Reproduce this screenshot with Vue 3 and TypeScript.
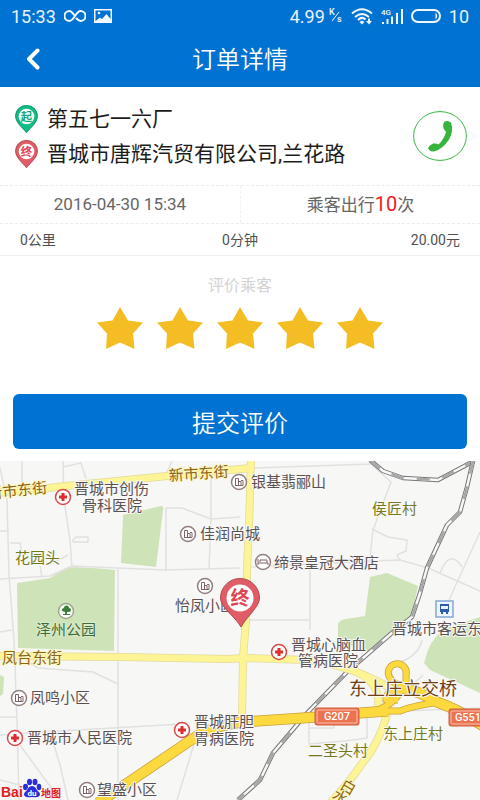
<script setup lang="ts">
import { ref } from 'vue'

interface MapLabel {
  text: string
  x: number
  y: number
  kind: 'poi' | 'village' | 'street' | 'park' | 'bridge'
  turn?: number
}

const rating = ref(5)

const labels: MapLabel[] = [
  { text: '新市东街', x: -12, y: 499, kind: 'street', turn: -6 },
  { text: '新市东街', x: 169, y: 481, kind: 'street', turn: -4 },
  { text: '凤台东街', x: 2, y: 663, kind: 'street' },
  { text: '白', x: 339, y: 788, kind: 'street', turn: 30 },
  { text: '水', x: 331, y: 798, kind: 'street', turn: 30 },
  { text: '晋城市创伤', x: 74, y: 494, kind: 'poi' },
  { text: '骨科医院', x: 82, y: 511, kind: 'poi' },
  { text: '银基翡郦山', x: 251, y: 487, kind: 'poi' },
  { text: '佳润尚城', x: 200, y: 539, kind: 'poi' },
  { text: '缔景皇冠大酒店', x: 274, y: 568, kind: 'poi' },
  { text: '怡凤小区', x: 175, y: 611, kind: 'poi' },
  { text: '晋城市客运东', x: 392, y: 634, kind: 'poi' },
  { text: '晋城心脑血', x: 291, y: 650, kind: 'poi' },
  { text: '管病医院', x: 298, y: 666, kind: 'poi' },
  { text: '凤鸣小区', x: 30, y: 703, kind: 'poi' },
  { text: '晋城市人民医院', x: 27, y: 743, kind: 'poi' },
  { text: '晋城肝胆', x: 194, y: 727, kind: 'poi' },
  { text: '胃病医院', x: 194, y: 744, kind: 'poi' },
  { text: '望盛小区', x: 97, y: 795, kind: 'poi' },
  { text: '侯匠村', x: 372, y: 514, kind: 'village' },
  { text: '花园头', x: 15, y: 563, kind: 'village' },
  { text: '东上庄村', x: 383, y: 739, kind: 'village' },
  { text: '二圣头村', x: 308, y: 756, kind: 'village' },
  { text: '泽州公园', x: 36, y: 635, kind: 'park' },
  { text: '东上庄立交桥', x: 349, y: 695, kind: 'bridge' },
]

const hospitals = [[63, 497], [279, 652], [182, 730], [15, 738]]
const estates = [[239, 482], [188, 534], [205, 586], [19, 698], [87, 790]]

const lanes = [
  'M0 468 L7 500 L9 575 L14 640 L17 720 L19 800',
  'M22 461 V482 M63 461 L64 500 L70 540 L72 568',
  'M63 467 L81 463 L86 479',
  'M166 474 L172 461',
  'M0 531 H9 M10 543 H20 L23 558',
  'M73 540 L76 537 H88 V542 H73 Z',
  'M0 579 L50 576 L72 566 L118 568 L166 570 L240 568',
  'M118 568 V800',
  'M166 571 V508 H182 L211 519 L240 517 M211 470 V518 L209 568',
  'M53 563 L68 555 M40 566 L42 577',
  'M251 468 L372 464 M372 465 L391 482 L373 530 L369 566',
  'M372 529 L388 537 L407 540 L406 551 L397 555 L400 561',
  'M250 567 L372 561 L400 560 L428 568 L480 591',
  'M310 568 V630 M247 620 H310',
  'M480 532 L449 600 M440 573 Q450 548 462 567',
  'M27 661 L38 668 L93 672 L118 684',
  'M0 717 H16 M0 735 L60 731 L182 724',
  'M20 745 L60 800 M54 745 L60 765 L68 800 M0 780 L20 785',
  'M195 741 L180 790 L177 800 M12 630 L0 632',
  'M309 713 V744 L345 741 L367 738 V716 M309 728 H334 V716',
  'M402 711 L480 708 M407 690 L423 675 M388 665 Q418 660 422 640',
]

const minorRoads = [
  'M-4 493 L48 488 L66 486 L167 476 L251 468',
  'M251 458 L249 527 L247 570 L246 620 L243 658 L242 716',
  'M-4 656 L120 657 L227 659 L247 658 L307 660 Q350 665 390 688',
  'M355 671 Q382 684 378 708',
  'M387 714 Q382 734 370 753 L350 780 L328 806',
]

const highways = [
  'M98 803 L197 736 Q216 725 242 722 L273 720 L317 717 L360 713 L388 711',
  'M396 686 Q420 691 437 702 Q462 711 486 728',
]

const ramps = [
  'M376 711 L400 711 Q415 705 441 702',
  'M402 690 Q407 684 406 675 A9 9 0 1 0 390 678 Q394 684 407 690',
  'M402 687 Q398 702 376 711',
  'M394 690 Q385 694 386 700 L398 700',
]

const rails = [
  'M370 460 L383 471 L403 478 L438 480 L474 461',
  'M473 461 L467 487 L460 512 L447 525 L427 568 L420 593 L412 617 L393 632 L347 672 L307 713 L273 753 L260 780 L238 800',
]
</script>

<template>
  <main class="screen">
    <div class="status">
      <div class="status-side">
        <span>15:33</span>
        <svg class="infinity" viewBox="0 0 22 14" aria-hidden="true">
          <path d="M11 7 C8 3 7 2 5.500 2 A5 5 0 0 0 5.500 12 C7.500 12 9 10 11 7 C13 4 14.500 2 16.500 2 A5 5 0 0 1 16.500 12 C14.500 12 13 10 12 9" />
        </svg>
        <svg class="photo" viewBox="0 0 18 14" aria-hidden="true">
          <path fill-rule="evenodd" d="M0 0H18V14H0Z M1.500 1.500V12L6 8.500 8 10 12.500 5 16.500 10V1.500Z" />
          <circle cx="5" cy="4" r="1.300" />
        </svg>
      </div>
      <div class="status-side">
        <span>4.99</span>
        <svg class="speed" viewBox="0 0 14 16" aria-hidden="true">
          <text x="0" y="7">K</text>
          <path d="M3 13 L10 4" />
          <text x="8" y="14">s</text>
        </svg>
        <svg class="wifi" viewBox="0 0 22 17" aria-hidden="true">
          <path d="M1 5.500 Q11 -3 21 5.500 M4 9 Q11 3 18 9 M7 12 Q11 8 14.500 11.500" />
          <path class="solid" d="M8.500 14 L11 12.500 L13.500 14 L11 16.500Z M17 10.500H19V13H21L18 16.500 15 13H17Z" />
        </svg>
        <svg class="signal" viewBox="0 0 22 17" aria-hidden="true">
          <text x="0" y="7">4G</text>
          <path d="M2 14V16 M6.500 11V16 M11 8.500V16 M16 5V16 M21 1V16" />
        </svg>
        <svg class="battery" viewBox="0 0 30 14" aria-hidden="true">
          <rect x="1" y="1" width="28" height="12" rx="6" />
          <path class="solid" d="M24.500 3.500 Q28 7 24.500 10.500Z" />
        </svg>
        <span>10</span>
      </div>
    </div>

    <header class="bar">
      <button class="back" type="button" aria-label="返回">
        <svg viewBox="0 0 14 22" aria-hidden="true"><path d="M11.500 2.500 L3 11 L11.500 19.500" /></svg>
      </button>
      <h1>订单详情</h1>
    </header>

    <section class="route">
      <div class="stops">
        <div class="stop">
          <svg class="pin start" viewBox="0 0 22 27" aria-hidden="true">
            <path d="M11 .500 A10.500 10.500 0 0 1 21.500 11 C21.500 17 14.500 22 11 26.500 C7.500 22 .500 17 .500 11 A10.500 10.500 0 0 1 11 .500Z" />
            <circle cx="11" cy="11" r="7.500" />
            <text x="11" y="15">起</text>
          </svg>
          <span>第五七一六厂</span>
        </div>
        <div class="stop">
          <svg class="pin end" viewBox="0 0 22 27" aria-hidden="true">
            <path d="M11 .500 A10.500 10.500 0 0 1 21.500 11 C21.500 17 14.500 22 11 26.500 C7.500 22 .500 17 .500 11 A10.500 10.500 0 0 1 11 .500Z" />
            <circle cx="11" cy="11" r="7.500" />
            <text x="11" y="15">终</text>
          </svg>
          <span>晋城市唐辉汽贸有限公司,兰花路</span>
        </div>
      </div>
      <button class="call" type="button" aria-label="拨打电话">
        <svg viewBox="0 0 54 50" aria-hidden="true">
          <ellipse cx="27" cy="25" rx="26.400" ry="24.400" />
          <path d="M31.500 10.500 Q35 9 38 11.500 Q41 20 36 28.500 Q30 38 21 40.500 Q17 41 15 37.500 Q16 34.500 20 32.500 Q24 32 25.500 33.500 Q30.500 29 33 21 L30.500 17.500 Q29.500 13 31.500 10.500Z" />
        </svg>
      </button>
    </section>

    <section class="trip">
      <time class="cell" datetime="2016-04-30T15:34">2016-04-30 15:34</time>
      <p class="cell">乘客出行<strong>10</strong>次</p>
    </section>

    <section class="totals">
      <span>0公里</span>
      <span>0分钟</span>
      <span>20.00元</span>
    </section>

    <section class="review">
      <h2>评价乘客</h2>
      <div class="stars">
        <button
          v-for="n in 5"
          :key="n"
          type="button"
          class="star"
          :class="{ lit: n <= rating }"
          :aria-label="n + '星'"
          @click="rating = n"
        >
          <svg viewBox="0 0 46 42" aria-hidden="true">
            <path d="M23 0 L31 13.500 L46 15.500 L36 26.500 L37.500 42 L23 35.500 L9 42 L10 26.500 L0 15.500 L15.500 13.500Z" />
          </svg>
        </button>
      </div>
      <button class="submit" type="button">提交评价</button>
    </section>

    <svg class="map" viewBox="0 461 480 339" role="img" aria-label="地图">
      <rect class="land" x="0" y="461" width="480" height="339" />

      <g class="green">
        <path d="M123 515 L161 506 Q164 506 163 510 L156 567 L121 563Z" />
        <path d="M17 583 L50 578 L66 568 Q75 566 115 570 L114 651 L18 648Z" />
        <path d="M370 577 L387 573 L418 586 L412 614 L391 632 L368 652 L338 641 V624 Q339 620 346 619 L365 616Z" />
        <path d="M480 617 L446 628 Q433 637 428 650 L424 663 L430 670 L480 693Z" />
        <path d="M0 675 L4 677 L3 694 L0 696Z" />
      </g>

      <path v-for="d in lanes" :key="d" class="lane" :d="d" />

      <g v-for="d in rails" :key="d" class="rail">
        <path class="rail-edge" :d="d" />
        <path class="rail-bed" :d="d" />
        <path class="rail-tie" :d="d" />
      </g>

      <path v-for="d in minorRoads" :key="'e' + d" class="minor-edge" :d="d" />
      <path v-for="d in minorRoads" :key="d" class="minor" :d="d" />
      <path v-for="d in ramps" :key="'e' + d" class="ramp-edge" :d="d" />
      <path v-for="d in highways" :key="'e' + d" class="highway-edge" :d="d" />
      <path v-for="d in ramps" :key="d" class="ramp" :d="d" />
      <path v-for="d in highways" :key="d" class="highway" :d="d" />

      <g class="shield">
        <rect x="315" y="708" width="44" height="17" rx="2" />
        <rect class="shield-line" x="317" y="710" width="40" height="13" rx="1" />
        <text x="337" y="720">G207</text>
        <rect x="449" y="709" width="44" height="17" rx="2" />
        <rect class="shield-line" x="451" y="711" width="40" height="13" rx="1" />
        <text x="468" y="721">G551</text>
      </g>

      <g v-for="[x, y] in hospitals" :key="'h' + x" class="hospital" :transform="`translate(${x} ${y})`">
        <circle r="7.500" />
        <path d="M-1.500 -4H1.500V-1.500H4V1.500H1.500V4H-1.500V1.500H-4V-1.500H-1.500Z" />
      </g>
      <g v-for="[x, y] in estates" :key="'e' + x" class="estate" :transform="`translate(${x} ${y})`">
        <circle r="7.500" />
        <path d="M-3.500 3.500V-3.500H-.500V3.500 M-.500 -.500H2V3.500 M2 -1.500H4V3.500H-4" />
      </g>
      <g class="estate" transform="translate(263 562)">
        <circle r="7.500" />
        <path d="M-5 -3V3 M-5 1H5V3 M-3 0V-2H4V1" />
      </g>
      <g transform="translate(66 611)">
        <circle class="tree-disc" r="7.500" />
        <path class="tree" d="M-4 0 A2.500 2.500 0 0 1 -2 -3 A2.500 2.500 0 0 1 3 -3 A2 2 0 0 1 3 1 H1 V3 H4 V4 H-3 V3 H-1 V1Z" />
      </g>
      <g transform="translate(444 609)">
        <rect class="bus-sign" x="-8" y="-8" width="17" height="16" />
        <path class="bus" fill-rule="evenodd" d="M-4 -5H5V3H4V5H2V3H-1V5H-3V3H-4Z M-3 -3V0H4V-3Z" />
      </g>

      <text
        v-for="l in labels"
        :key="l.text + l.x"
        class="label"
        :class="l.kind"
        :x="l.x"
        :y="l.y"
        :transform="l.turn ? `rotate(${l.turn} ${l.x} ${l.y})` : undefined"
      >{{ l.text }}</text>

      <g class="goal">
        <path d="M240 578.500 A19.500 19.500 0 0 1 259.500 598 C259.500 607 247 616 241 627 C235 616 220.500 608 220.500 598 A19.500 19.500 0 0 1 240 578.500Z" />
        <circle cx="240" cy="598" r="13.500" />
        <text x="240" y="605">终</text>
      </g>

      <g class="baidu">
        <text class="baidu-name" x="1" y="797">Bai</text>
        <g class="paw">
          <ellipse cx="25.500" cy="787" rx="2.500" ry="3.200" />
          <ellipse cx="29.500" cy="782" rx="2.500" ry="3.200" />
          <ellipse cx="35" cy="782" rx="2.500" ry="3.200" />
          <ellipse cx="39" cy="787" rx="2.300" ry="3.200" />
          <path d="M32 786 C36 786 36 790 39 792 C42 796 38 798 32 797 C26 798 22 796 25 792 C28 790 28 786 32 786Z" />
        </g>
        <text class="baidu-du" x="32" y="796">du</text>
        <text class="baidu-map" x="41" y="797">地图</text>
      </g>
    </svg>
  </main>
</template>

<style>
body {
  margin: 0;
  background: #fff;
}
</style>

<style scoped>
.screen {
  font-family: Roboto, "Noto Sans CJK SC", sans-serif;
  color: #1c1c1c;
  background: #fff;
  overflow: hidden;
}

svg {
  display: block;
  flex: none;
}

button {
  padding: 0;
  border: 0;
  background: none;
  font-family: inherit;
  cursor: pointer;
}

h1,
h2,
p {
  margin: 0;
  font-weight: 400;
}

.status {
  display: flex;
  justify-content: space-between;
  height: 32px;
  padding: 0 11px;
  background: #0072d1;
  color: #e8f3fc;
  font-size: 18px;
}

.status-side {
  display: flex;
  align-items: center;
  gap: 8px;
}

.status path,
.status rect {
  fill: none;
  stroke: #f0f7fd;
  stroke-width: 2;
}

.status .solid,
.photo circle {
  fill: #f0f7fd;
  stroke: none;
}

.status .photo path {
  fill: #f0f7fd;
  stroke: none;
}

.status text {
  fill: #f0f7fd;
  font-size: 8px;
  font-weight: 500;
}

.infinity { width: 22px; height: 14px; }
.photo { width: 18px; height: 14px; }
.speed { width: 14px; height: 16px; margin-left: -4px; }
.status .speed path { stroke-width: 1; }
.status .speed text { font-size: 9px; }
.wifi { width: 22px; height: 17px; }
.signal { width: 22px; height: 17px; }
.battery { width: 30px; height: 14px; }

.bar {
  display: grid;
  grid-template-columns: 48px 1fr 48px;
  align-items: center;
  height: 55px;
  background: #0072d1;
  color: #fff;
}

.bar h1 {
  font-size: 24px;
  line-height: 32px;
  font-weight: 350;
  text-align: center;
}

.back {
  padding: 6px 0 8px 26px;
}

.back svg {
  width: 14px;
  height: 22px;
}

.back path {
  fill: none;
  stroke: #fff;
  stroke-width: 4;
  stroke-linecap: round;
  stroke-linejoin: round;
}

.route {
  display: flex;
  align-items: center;
  justify-content: space-between;
  height: 98px;
  padding: 0 13px 0 15px;
}

.stops {
  display: grid;
}

.stop {
  display: flex;
  align-items: center;
  gap: 9px;
  height: 35px;
  font-size: 21px;
  line-height: 34px;
}

.pin {
  width: 23px;
  height: 28px;
}

.pin circle { fill: #fff; }
.pin text {
  font-size: 11px;
  font-weight: 700;
  text-anchor: middle;
}

.start path { fill: #13bd85; stroke: #109e70; }
.start text { fill: #13a877; }
.end path { fill: #e05d67; stroke: #bd5059; }
.end text { fill: #e04453; }

.call svg {
  width: 54px;
  height: 50px;
}

.call ellipse {
  fill: none;
  stroke: #38b449;
  stroke-width: 1;
}

.call path { fill: #36b43b; }

.trip {
  display: grid;
  grid-template-columns: 1fr 1fr;
  border-top: 1px dashed #ececec;
  border-bottom: 1px dashed #ececec;
  color: #666;
  font-size: 17px;
}

.cell {
  height: 37px;
  line-height: 36px;
  text-align: center;
}

.cell + .cell {
  border-left: 1px dashed #f1f1f1;
}

.cell strong {
  color: #ee1c1c;
  font-size: 20px;
  font-weight: 400;
}

.totals {
  display: grid;
  grid-template-columns: 1fr 1fr 1fr;
  height: 31px;
  padding: 0 20px;
  border-bottom: 1px solid #f0f0f0;
  color: #505050;
  font-size: 14px;
  line-height: 32px;
}

.totals span:nth-child(2) { text-align: center; }
.totals span:nth-child(3) { text-align: right; }

.review {
  display: grid;
  padding: 18px 13px 12px;
}

.review h2 {
  color: #d3d3d3;
  font-size: 16px;
  line-height: 24px;
  text-align: center;
}

.stars {
  display: flex;
  justify-content: center;
  gap: 14px;
  padding: 9px 0 45px;
}

.star svg {
  width: 46px;
  height: 42px;
}

.star path { fill: #ddd; }
.star.lit path { fill: #f4bd24; }

.submit {
  height: 55px;
  border-radius: 6px;
  background: #0072d1;
  color: #fff;
  font-size: 24px;
  font-weight: 350;
}

.map {
  width: 100%;
  height: auto;
}

.map path { stroke-linejoin: round; }
.land { fill: #f7f7f6; }
.green path { fill: #cfe3b9; }

.lane,
.minor-edge,
.minor,
.highway-edge,
.highway,
.ramp-edge,
.ramp,
.rail path {
  fill: none;
}

.lane { stroke: #e1e1e1; stroke-width: 1.5; }
.minor-edge { stroke: #e3da9c; stroke-width: 8; }
.minor { stroke: #fdf496; stroke-width: 6.5; }
.highway-edge { stroke: #c9a13b; stroke-width: 11; }
.highway { stroke: #fcd93e; stroke-width: 9.5; }
.ramp-edge { stroke: #c9a13b; stroke-width: 7; }
.ramp { stroke: #fcd93e; stroke-width: 5.5; }
.rail .rail-edge { stroke: #777; stroke-width: 4.5; }
.rail .rail-bed { stroke: #f8f8f8; stroke-width: 2.5; }
.rail .rail-tie { stroke: #a8a8a8; stroke-width: 2.5; stroke-dasharray: 13 13; }

.shield rect { fill: #ec7350; stroke: #d05f3f; stroke-width: 1; }
.shield .shield-line { fill: none; stroke: #f7c0ad; }
.shield text {
  fill: #fff;
  font-size: 11px;
  font-weight: 500;
  text-anchor: middle;
}

.hospital circle { fill: #fff; stroke: #d94848; stroke-width: 1.5; }
.hospital path { fill: #df2c2c; }
.estate circle,
.tree-disc { fill: #fff; stroke: #927f80; stroke-width: 1.5; }
.estate path { fill: none; stroke: #806468; stroke-width: 1; }
.tree-disc { stroke: #9ba98b; }
.tree { fill: #3a8039; }
.bus-sign { fill: #eef5fc; stroke: #83a9d8; stroke-width: 1.5; }
.bus { fill: #2a5ca8; }

.label {
  font-size: 15px;
  paint-order: stroke;
  stroke: #f9f9f8;
  stroke-width: 2;
  stroke-linejoin: round;
}

.poi { fill: #5b5152; }
.village { fill: #74791b; }
.street { fill: #8e6417; stroke: #fdf7c0; }
.park { fill: #3c6b3a; stroke: #dcebcb; }
.bridge { fill: #713f16; font-size: 18px; }

.goal path { fill: #e05d67; stroke: #b34a53; stroke-width: 1; }
.goal circle { fill: #fff; }
.goal text {
  fill: #e04453;
  font-size: 19px;
  font-weight: 700;
  text-anchor: middle;
}

.paw { fill: #2c2fd8; stroke: #fff; stroke-width: 1; paint-order: stroke; }
.baidu text { font-weight: 700; fill: #e02020; }
.baidu .baidu-name { font-family: "Liberation Sans", sans-serif; font-size: 14px; }
.baidu .baidu-du { fill: #fff; font-size: 8px; text-anchor: middle; }
.baidu .baidu-map { font-size: 10px; }
</style>
